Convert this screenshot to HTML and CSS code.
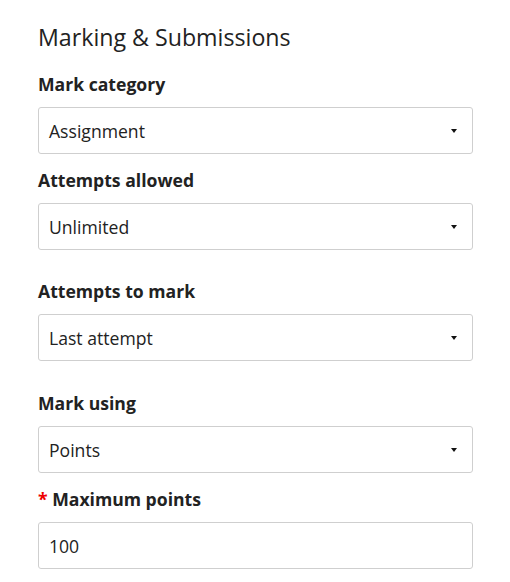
FILE: index.html
```html
<!DOCTYPE html>
<html>
<head>
<meta charset="utf-8">
<link rel="stylesheet" href="styles.css">
</head>
<body>
<div class="panel">
  <h2 class="title">Marking &amp; Submissions</h2>
  <div class="field field-tight">
    <div class="label">Mark category</div>
    <div class="select"><span>Assignment</span><span class="caret"></span></div>
  </div>
  <div class="field field-wide">
    <div class="label">Attempts allowed</div>
    <div class="select"><span>Unlimited</span><span class="caret"></span></div>
  </div>
  <div class="field field-wider">
    <div class="label">Attempts to mark</div>
    <div class="select"><span>Last attempt</span><span class="caret"></span></div>
  </div>
  <div class="field field-tight">
    <div class="label">Mark using</div>
    <div class="select"><span>Points</span><span class="caret"></span></div>
  </div>
  <div class="field">
    <div class="label"><span class="req">*</span> Maximum points</div>
    <div class="input">100</div>
  </div>
</div>
</body>
</html>
```
FILE: styles.css
```css
html, body {
  margin: 0;
  padding: 0;
  background: #fff;
}
body {
  font-family: "Open Sans", "Liberation Sans", sans-serif;
  color: #222;
}
.panel {
  width: 435px;
  padding: 22px 0 0 38px;
}
.title {
  margin: 0 0 20px;
  font-size: 23.2px;
  line-height: 30px;
  font-weight: 400;
  color: #222;
}
.field-tight { margin-bottom: 14px; }
.field-wide { margin-bottom: 29px; }
.field-wider { margin-bottom: 30px; }
.label {
  font-size: 17.6px;
  line-height: 24px;
  font-weight: 700;
  margin-bottom: 11px;
}
.req {
  color: #e00;
}
.select, .input {
  box-sizing: border-box;
  height: 47px;
  border: 1px solid #cfcfcf;
  border-radius: 3px;
  padding: 0 15px 0 10px;
  display: flex;
  align-items: center;
  justify-content: space-between;
  font-size: 17.6px;
  color: #222;
}
.caret {
  width: 0;
  height: 0;
  border-left: 3.5px solid transparent;
  border-right: 3.5px solid transparent;
  border-top: 4px solid #111;
}
```
